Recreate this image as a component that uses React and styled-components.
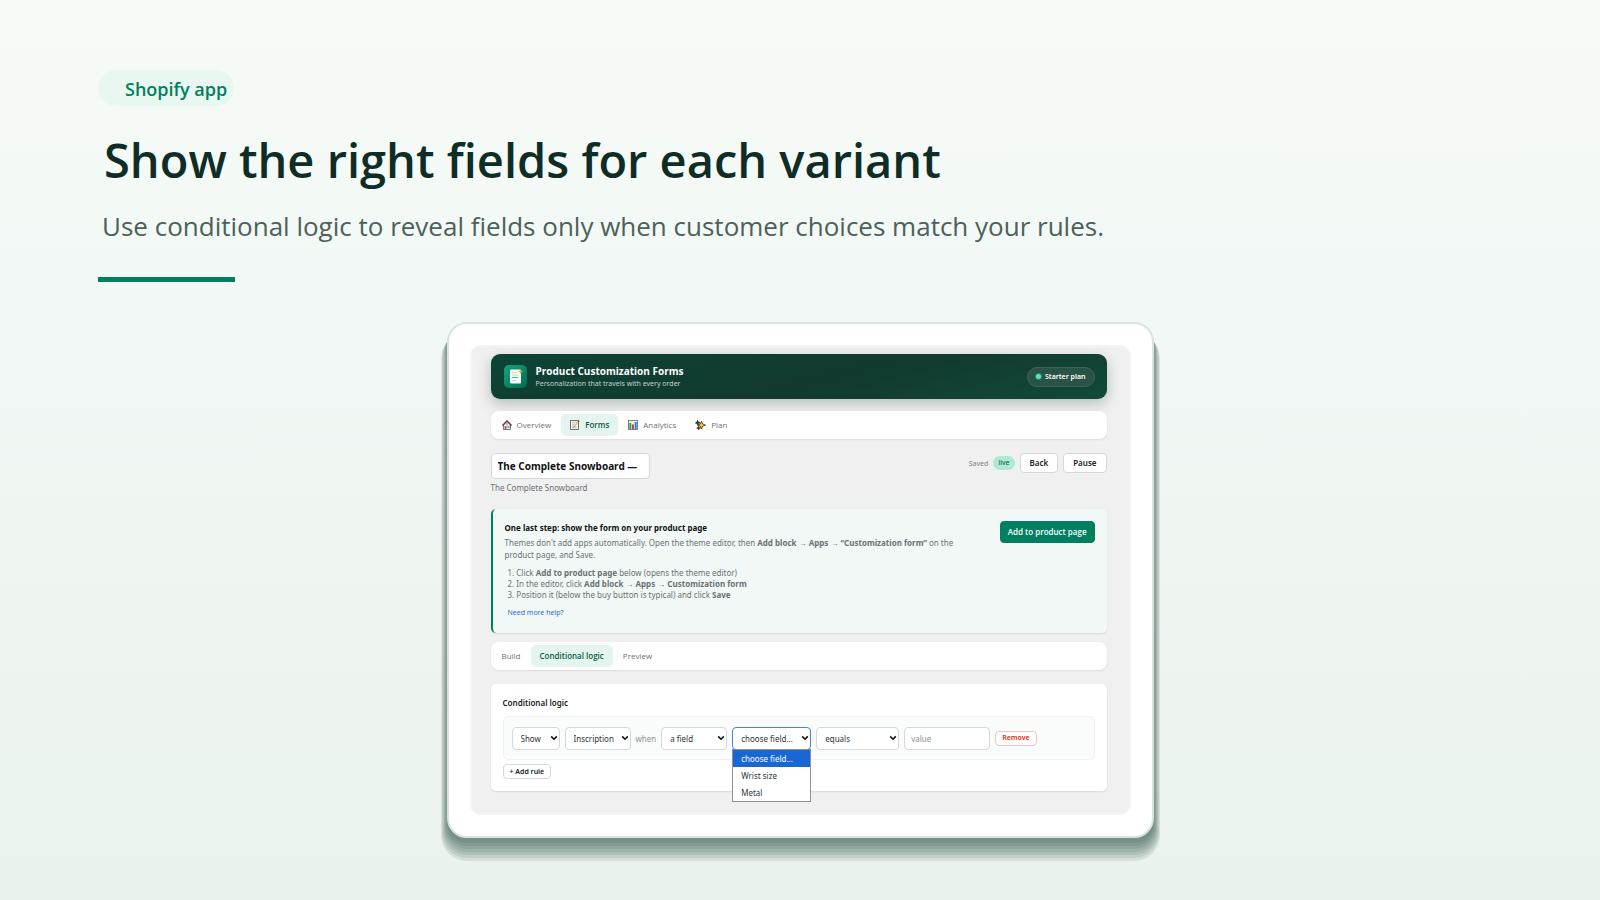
import React, { useState } from 'react';
import styled, { createGlobalStyle, css } from 'styled-components';

const displayFont = '"Open Sans", "Noto Sans", sans-serif';
const textFont = '"Noto Sans", "Open Sans", "Liberation Sans", sans-serif';

const GlobalStyle = createGlobalStyle`
    * {
        box-sizing: border-box;
    }
    body {
        margin: 0;
        font-family: ${displayFont};
        font-size: 8px;
        color: #202223;
    }
    button, input, select {
        font-family: inherit;
        margin: 0;
    }
`;

const Page = styled.main`
    min-height: 100vh;
    padding: 70px 98px 62px;
    background: linear-gradient(#f6fbf8, #eaf2ee);
`;

const Intro = styled.header`
    display: flex;
    flex-direction: column;
    align-items: flex-start;
`;

const Pill = styled.span`
    height: 36px;
    padding: 0 7px 0 27px;
    border-radius: 18px;
    background-color: #e8f7f0;
    color: #008060;
    font-size: 18px;
    font-weight: 600;
    line-height: 38px;
`;

const Title = styled.h1`
    margin: 20px 0 0 6px;
    color: #0f2d26;
    font-size: 47px;
    font-weight: 600;
    line-height: 68px;
`;

const Subtitle = styled.p`
    margin: 12px 0 0 4px;
    color: #4b615a;
    font-size: 26px;
    line-height: 40px;
`;

const Accent = styled.hr`
    width: 137px;
    height: 5px;
    margin: 31px 0 0;
    border: none;
    background-color: #008060;
`;

const shadowLayers = [1, 2, 3, 4, 5, 6, 7]
    .map((i) => `0 ${2 * i + 3}px 0 ${i - 1}px rgba(18, 56, 47, 0.1)`)
    .join(', ');

const Device = styled.section`
    max-width: 707px;
    margin: 40px auto 0;
    padding: 21px;
    border: 2px solid #d8e5df;
    border-radius: 20px;
    background-color: #fff;
    box-shadow: ${shadowLayers};
`;

const Screen = styled.div`
    padding: 7px 22px 22px 19px;
    border: 2px solid #f5f5f5;
    border-radius: 10px;
    background-color: #f0f0f0;
    font-family: ${textFont};
`;

const AppHeader = styled.div`
    display: flex;
    align-items: center;
    gap: 9px;
    height: 45px;
    padding: 0 12px 0 13px;
    border-radius: 9px;
    background: linear-gradient(165deg, #0c4435 0%, #12392f 55%, #114a39 100%);
    box-shadow: 0 5px 14px rgba(15, 45, 38, 0.25);
`;

const AppInfo = styled.div`
    flex: 1;
`;

const AppName = styled.h2`
    margin: 0;
    color: #fff;
    font-family: ${displayFont};
    font-size: 10px;
    font-weight: 700;
    line-height: 14px;
`;

const AppTagline = styled.p`
    margin: 0;
    color: #c3d1cc;
    font-size: 7px;
    line-height: 12px;
`;

const PlanBadge = styled.span`
    display: flex;
    align-items: center;
    gap: 4px;
    height: 20px;
    padding: 0 8px;
    border: 1px solid #3f6358;
    border-radius: 10px;
    background-color: #2a5347;
    color: #fff;
    font-size: 7px;
    font-weight: 600;
`;

const Dot = styled.i`
    width: 5px;
    height: 5px;
    border-radius: 50%;
    background-color: #5ee6ae;
    box-shadow: 0 0 0 1px #2f8268;
`;

const TabBar = styled.nav`
    display: flex;
    gap: 1px;
    height: 28px;
    margin-top: ${(props) => props.$top}px;
    padding: 3px 2px;
    border-radius: 8px;
    background-color: #fff;
    box-shadow: 0 1px 2px rgba(0, 0, 0, 0.08);
`;

const Tab = styled.button`
    display: flex;
    align-items: center;
    gap: 5px;
    padding: 0 9px 1px;
    border: none;
    border-radius: 5px;
    background-color: transparent;
    color: #6d7175;
    font-family: ${displayFont};
    font-size: 8px;
    font-weight: 500;
    cursor: pointer;
    ${(props) => props.$active && css`
        background-color: #e3f5ee;
        color: #0b5a43;
        font-weight: 600;
    `}
`;

const FormHead = styled.div`
    display: flex;
    align-items: flex-start;
    justify-content: space-between;
    margin-top: 14px;
`;

const NameInput = styled.input`
    display: block;
    width: 159px;
    height: 26px;
    padding: 0 6px;
    border: 1px solid #d5d8da;
    border-radius: 4px;
    background-color: #fff;
    color: #111213;
    font-size: 10px;
    font-weight: 700;
`;

const ProductName = styled.p`
    margin: 2px 0 0;
    color: #6d7175;
    font-size: 8px;
    line-height: 14px;
`;

const Actions = styled.div`
    display: flex;
    align-items: center;
    gap: 5px;
`;

const Saved = styled.span`
    color: #7b7f83;
    font-size: 7px;
`;

const Live = styled.span`
    height: 14px;
    padding: 0 5px;
    border-radius: 7px;
    background-color: #aee9d1;
    color: #0b5a43;
    font-size: 7px;
    line-height: 14px;
`;

const Button = styled.button`
    height: 20px;
    padding: 0 9px;
    border: 1px solid #d5d8da;
    border-radius: 4px;
    background-color: #fff;
    color: #202223;
    font-size: 8px;
    font-weight: 600;
    line-height: 12px;
    white-space: nowrap;
    cursor: pointer;
    ${(props) => props.$small && css`
        height: 15px;
        padding: 0 6px;
        font-size: 7px;
    `}
    ${(props) => props.$danger && css`
        border-color: #f3c5c0;
        color: #d72c0d;
    `}
    ${(props) => props.$primary && css`
        height: 22px;
        padding: 0 7px;
        border-color: #008060;
        background-color: #008060;
        color: #fff;
        font-family: ${displayFont};
    `}
`;

const Notice = styled.section`
    display: flex;
    align-items: flex-start;
    justify-content: space-between;
    gap: 30px;
    height: 124px;
    margin-top: 14px;
    padding: 12px;
    border-left: 2px solid #008060;
    border-radius: 5px;
    background-color: #f1f8f6;
    box-shadow: 0 1px 2px rgba(0, 0, 0, 0.1);
`;

const NoticeTitle = styled.h3`
    margin: 0;
    color: #111213;
    font-size: 8px;
    font-weight: 700;
    line-height: 14px;
`;

const NoticeText = styled.p`
    margin: 2px 0 0;
    color: #6d7175;
    font-size: 8px;
    line-height: 12px;
`;

const Steps = styled.ol`
    margin: 6px 0 0;
    padding: 0 0 0 3px;
    color: #6d7175;
    font-size: 8px;
    line-height: 11px;
    list-style: none;
`;

const HelpLink = styled.a`
    display: inline-block;
    margin: 7px 0 0 3px;
    color: #2c6ecb;
    font-size: 7px;
    line-height: 11px;
    text-decoration: none;
`;

const Card = styled.section`
    height: 107px;
    margin-top: 14px;
    padding: 12px;
    border-radius: 5px;
    background-color: #fff;
    box-shadow: 0 1px 2px rgba(0, 0, 0, 0.1);
`;

const CardTitle = styled.h3`
    margin: 0 0 6px;
    font-size: 8px;
    font-weight: 600;
    line-height: 14px;
`;

const Rule = styled.div`
    display: flex;
    align-items: center;
    gap: 5px;
    height: 44px;
    margin-bottom: 4px;
    padding: 0 8px;
    border: 1px solid #f0f2f2;
    border-radius: 5px;
    background-color: #fafcfb;
`;

const When = styled.span`
    color: #8c9196;
    font-size: 8px;
`;

const Field = styled.div`
    position: relative;
    display: grid;
    align-items: center;
    width: ${(props) => props.$width}px;
    > * {
        grid-area: 1 / 1;
    }
    > svg {
        justify-self: end;
        margin-right: 2px;
        pointer-events: none;
    }
`;

const control = css`
    width: 100%;
    height: 23px;
    padding: 0 8px;
    border: 1px solid #d5d8da;
    border-radius: 4px;
    background-color: #fff;
    color: #303335;
    font-size: 8px;
    outline: none;
`;

const Select = styled.select`
    ${control}
    appearance: none;
    border-color: ${(props) => (props.$open ? '#4a80dd' : '#d5d8da')};
`;

const TextInput = styled.input`
    ${control}
    padding: 0 6px;
    &::placeholder {
        color: #8c9196;
    }
`;

const Menu = styled.ul`
    position: absolute;
    top: 22px;
    left: 0;
    right: 0;
    margin: 0;
    padding: 0;
    border: 1px solid #8f8f8f;
    background-color: #fff;
    list-style: none;
    z-index: 2;
`;

const MenuItem = styled.li`
    padding: 0 8px;
    color: #303335;
    font-size: 8px;
    line-height: 17px;
    ${(props) => props.$selected && css`
        background-color: #1967d2;
        color: #fff;
    `}
`;

const Logo = () => (
    <svg width="23" height="23" viewBox="0 0 23 23" aria-hidden="true">
        <defs>
            <linearGradient id="logo" x1="0" y1="0" x2="1" y2="1">
                <stop offset="0" stopColor="#12a67e" />
                <stop offset="1" stopColor="#046a50" />
            </linearGradient>
        </defs>
        <rect width="23" height="23" rx="5" fill="url(#logo)" />
        <rect x="6" y="4.500" width="11" height="14" rx="1.200" fill="#f7fbf9" />
        <path d="M8 7.500h5" stroke="#f3c998" strokeWidth="1" />
        <path d="M8 10h6.500M8 15.500h4" stroke="#c4d3cd" strokeWidth="1" />
        <path d="M8 12.500h6" stroke="#5fb59b" strokeWidth="1.200" />
        <path d="M16.500 4l.8 1.700 1.700.8-1.700.8-.8 1.700-.8-1.700-1.700-.8 1.700-.8z" fill="#f2a33a" />
    </svg>
);

const HomeIcon = () => (
    <svg width="10" height="10" viewBox="0 0 10 10" aria-hidden="true">
        <path d="M1.500 5v4.500h7V5L5 1.500z" fill="#eceff1" stroke="#444" strokeWidth=".7" />
        <path d="M.4 5.600L5 .9l4.600 4.700" fill="none" stroke="#7a2e2b" strokeWidth="1.300" />
        <rect x="2.600" y="6" width="2" height="3.300" fill="#e0533f" />
        <rect x="5.500" y="5.800" width="2" height="2" fill="#3fa9e0" />
        <rect x="4.300" y="3.300" width="1.400" height="1.400" fill="#3fa9e0" />
    </svg>
);

const MemoIcon = () => (
    <svg width="10" height="10" viewBox="0 0 10 10" aria-hidden="true">
        <rect x=".6" y=".5" width="7.900" height="9" fill="#f4f4f4" stroke="#555" strokeWidth=".8" />
        <path d="M2 2.500h5M2 4.200h3.500M2 6h2M2 7.700h5" stroke="#a9adb0" strokeWidth=".6" />
        <path d="M4 6.800L8.600 1.700" stroke="#e8b45a" strokeWidth="1.200" />
        <path d="M8.300 2.100l.9-1" stroke="#5a4a42" strokeWidth="1.500" />
        <path d="M3.500 7.400l.8-.9" stroke="#333" strokeWidth="1" />
    </svg>
);

const ChartIcon = () => (
    <svg width="10" height="10" viewBox="0 0 10 10" aria-hidden="true">
        <rect x=".5" y=".5" width="9" height="9" fill="#eef1f3" stroke="#666" strokeWidth=".8" />
        <rect x="1.300" y="3" width="2" height="6" fill="#22a95a" />
        <rect x="4" y="4.500" width="2" height="4.500" fill="#e5383b" />
        <rect x="6.700" y="2" width="2" height="7" fill="#1e88e5" />
    </svg>
);

const SparklesIcon = () => (
    <svg width="11" height="10" viewBox="0 0 11 10" aria-hidden="true">
        <path d="M2.600.3l.9 1.600 1.700.7-1.500 1L3 5.500 2 3.800.3 3l1.500-.9z" fill="#1f3d40" stroke="#1f2d30" strokeWidth=".6" />
        <path d="M3.500 6l.8 1.400 1.300.6-1.300.6-.6 1.300L3 8.600l-1.400-.5L3 7.400z" fill="#3a3526" stroke="#222" strokeWidth=".5" />
        <path d="M6.500 1.200l1.100 2.800 2.900 1.100-2.900 1.100L6.500 9 5.400 6.200 2.600 5.100 5.400 4z" fill="#ffd21f" stroke="#33301c" strokeWidth=".8" />
    </svg>
);

const Chevron = () => (
    <svg width="8" height="6" viewBox="0 0 8 6" aria-hidden="true">
        <path d="M1.200 1.400L4 4.200l2.800-2.800" fill="none" stroke="#111" strokeWidth="1.600" />
    </svg>
);

const mainTabs = [
    { label: 'Overview', Icon: HomeIcon },
    { label: 'Forms', Icon: MemoIcon },
    { label: 'Analytics', Icon: ChartIcon },
    { label: 'Plan', Icon: SparklesIcon },
];

const formTabs = ['Build', 'Conditional logic', 'Preview'];

const fieldOptions = ['choose field...', 'Wrist size', 'Metal'];

const SelectField = ({ label, width, options, open }) => (
    <Field $width={width}>
        <Select aria-label={label} $open={open}>
            {options.map((option) => (
                <option key={option}>{option}</option>
            ))}
        </Select>
        <Chevron />
        {open && (
            <Menu role="listbox" aria-label={label}>
                {options.map((option, i) => (
                    <MenuItem key={option} role="option" aria-selected={i === 0} $selected={i === 0}>
                        {option}
                    </MenuItem>
                ))}
            </Menu>
        )}
    </Field>
);

const App = () => {
    const [mainTab, setMainTab] = useState('Forms');
    const [formTab, setFormTab] = useState('Conditional logic');
    const [name, setName] = useState('The Complete Snowboard —');

    return (
        <Page>
            <GlobalStyle />
            <Intro>
                <Pill>Shopify app</Pill>
                <Title>Show the right fields for each variant</Title>
                <Subtitle>Use conditional logic to reveal fields only when customer choices match your rules.</Subtitle>
                <Accent />
            </Intro>
            <Device>
                <Screen>
                    <AppHeader>
                        <Logo />
                        <AppInfo>
                            <AppName>Product Customization Forms</AppName>
                            <AppTagline>Personalization that travels with every order</AppTagline>
                        </AppInfo>
                        <PlanBadge><Dot />Starter plan</PlanBadge>
                    </AppHeader>
                    <TabBar $top={12}>
                        {mainTabs.map(({ label, Icon }) => (
                            <Tab key={label} $active={label === mainTab} onClick={() => setMainTab(label)}>
                                <Icon />
                                {label}
                            </Tab>
                        ))}
                    </TabBar>
                    <FormHead>
                        <div>
                            <NameInput aria-label="Form name" value={name} onChange={(e) => setName(e.target.value)} />
                            <ProductName>The Complete Snowboard</ProductName>
                        </div>
                        <Actions>
                            <Saved>Saved</Saved>
                            <Live>live</Live>
                            <Button>Back</Button>
                            <Button>Pause</Button>
                        </Actions>
                    </FormHead>
                    <Notice>
                        <div>
                            <NoticeTitle>One last step: show the form on your product page</NoticeTitle>
                            <NoticeText>
                                Themes don't add apps automatically. Open the theme editor, then{' '}
                                <b>Add block → Apps → “Customization form”</b> on the product page, and Save.
                            </NoticeText>
                            <Steps>
                                <li>1. Click <b>Add to product page</b> below (opens the theme editor)</li>
                                <li>2. In the editor, click <b>Add block → Apps → Customization form</b></li>
                                <li>3. Position it (below the buy button is typical) and click <b>Save</b></li>
                            </Steps>
                            <HelpLink href="#help">Need more help?</HelpLink>
                        </div>
                        <Button $primary>Add to product page</Button>
                    </Notice>
                    <TabBar $top={9}>
                        {formTabs.map((label) => (
                            <Tab key={label} $active={label === formTab} onClick={() => setFormTab(label)}>
                                {label}
                            </Tab>
                        ))}
                    </TabBar>
                    <Card>
                        <CardTitle>Conditional logic</CardTitle>
                        <Rule>
                            <SelectField label="Action" width={48} options={['Show', 'Hide']} />
                            <SelectField label="Target field" width={66} options={['Inscription']} />
                            <When>when</When>
                            <SelectField label="Source" width={66} options={['a field']} />
                            <SelectField label="Field" width={79} options={fieldOptions} open />
                            <SelectField label="Operator" width={83} options={['equals']} />
                            <Field $width={86}>
                                <TextInput aria-label="Value" placeholder="value" />
                            </Field>
                            <Button $small $danger>Remove</Button>
                        </Rule>
                        <Button $small>+ Add rule</Button>
                    </Card>
                </Screen>
            </Device>
        </Page>
    );
}

export default App
